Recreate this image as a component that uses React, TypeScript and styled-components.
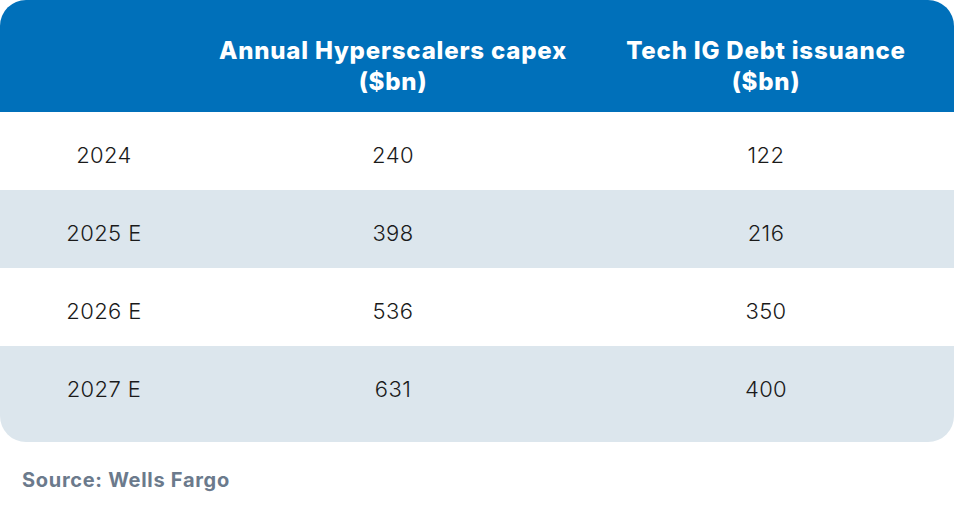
import styled, { createGlobalStyle } from "styled-components";

const GlobalStyle = createGlobalStyle`
  html, body {
    margin: 0;
    padding: 0;
    background: #ffffff;
  }
  * {
    box-sizing: border-box;
  }
`;

const Page = styled.div`
  width: 954px;
  font-family: Inter, "Noto Sans", sans-serif;
`;

const Table = styled.table`
  width: 100%;
  border-collapse: separate;
  border-spacing: 0;
  border-radius: 26px;
  overflow: hidden;
  table-layout: fixed;
`;

const HeadCell = styled.th<{ $width: number }>`
  width: ${({ $width }) => $width}px;
  height: 112px;
  background: #0070ba;
  color: #ffffff;
  font-size: 24px;
  font-weight: 800;
  line-height: 31px;
  text-align: center;
  padding: 20px 8px 0;
  letter-spacing: 0.8px;
`;

const Row = styled.tr<{ $shaded: boolean }>`
  background: ${({ $shaded }) => ($shaded ? "#dce6ed" : "#ffffff")};
`;

const Cell = styled.td<{ $last: boolean }>`
  height: ${({ $last }) => ($last ? 96 : 78)}px;
  padding: 8px 0 ${({ $last }) => ($last ? 18 : 0)}px;
  text-align: center;
  font-size: 22px;
  font-weight: 300;
  letter-spacing: 0.4px;
  color: #1a1a1a;
`;

const Source = styled.p`
  margin: 26px 0 0 22px;
  font-size: 20px;
  font-weight: 700;
  letter-spacing: 0.7px;
  color: #6b7a8c;
`;

const rows = [
  { year: "2024", capex: 240, debt: 122 },
  { year: "2025 E", capex: 398, debt: 216 },
  { year: "2026 E", capex: 536, debt: 350 },
  { year: "2027 E", capex: 631, debt: 400 }
];

const App = () => {
  return (
    <Page>
      <GlobalStyle />
      <Table>
        <thead>
          <tr>
            <HeadCell $width={208}></HeadCell>
            <HeadCell $width={370}>Annual Hyperscalers capex ($bn)</HeadCell>
            <HeadCell $width={376}>
              Tech IG Debt issuance
              <br />
              ($bn)
            </HeadCell>
          </tr>
        </thead>
        <tbody>
          {rows.map((row, i) => {
            const last = i === rows.length - 1;
            return (
              <Row key={row.year} $shaded={i % 2 === 1}>
                <Cell $last={last}>{row.year}</Cell>
                <Cell $last={last}>{row.capex}</Cell>
                <Cell $last={last}>{row.debt}</Cell>
              </Row>
            );
          })}
        </tbody>
      </Table>
      <Source>Source: Wells Fargo</Source>
    </Page>
  );
};

export default App;
